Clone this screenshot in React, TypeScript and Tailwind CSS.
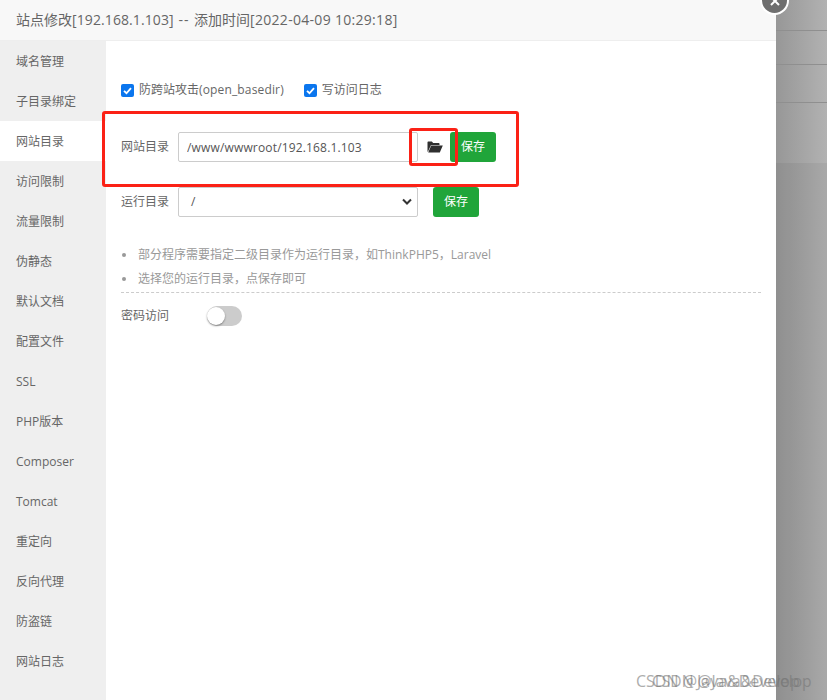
const font = '"Open Sans", "Noto Sans CJK SC", sans-serif';
const items = ["域名管理","子目录绑定","网站目录","访问限制","流量限制","伪静态","默认文档","配置文件","SSL","PHP版本","Composer","Tomcat","重定向","反向代理","防盗链","网站日志"];

function Check({ children, className }: { children: React.ReactNode; className?: string }) {
  return (
    <label className={"flex items-center " + (className ?? "")}>
      <span className="flex h-[13px] w-[13px] items-center justify-center rounded-[2px] bg-[#0b76ee]">
        <svg width="11" height="11" viewBox="0 0 12 12" fill="none">
          <path d="M2.2 6.3 4.9 9 9.8 3.4" stroke="#fff" strokeWidth="2" />
        </svg>
      </span>
      <span className="ml-[5px] text-[12px] text-[#666]">{children}</span>
    </label>
  );
}

function SaveButton({ className }: { className?: string }) {
  return (
    <button className={"h-[30px] w-[46px] rounded-[3px] bg-[#20a53a] text-[12px] text-white " + (className ?? "")}>保存</button>
  );
}

export default function App() {
  return (
    <div className="relative flex h-[700px] w-[827px] overflow-hidden" style={{ fontFamily: font }}>
      <div className="relative z-10 flex w-[776px] flex-col bg-white">
        <div className="flex h-[41px] items-center border-b border-[#eee] bg-[#f8f8f8] pb-[2px] pl-4 text-[14px] text-[#666]">
          <span className="whitespace-pre">站点修改<span className="tracking-[0.1px]">[192.168.1.103]</span><span className="tracking-[1px]"> -- </span>添加时间<span className="tracking-[0.3px]">[2022-04-09 10:29:18]</span></span>
        </div>
        <div className="flex flex-1">
          <div className="w-[106px] bg-[#efefef]">
            {items.map((t, i) => (
              <div key={t} className={"flex h-10 items-center pl-4 pt-[2px] text-[12px] text-[#666] " + (i === 2 ? "bg-white" : "")}>{t}</div>
            ))}
          </div>
          <div className="flex-1 pl-[15px] pr-[15px] pt-[41px]">
            <div className="flex h-4 items-center">
              <Check>防跨站攻击<span className="tracking-[0.15px]">(open_basedir)</span></Check>
              <Check className="ml-[20px]">写访问日志</Check>
            </div>
            <div className="relative mt-[34px] flex h-[30px] items-center">
              <span className="w-[57px] text-[12px] text-[#666]">网站目录</span>
              <input readOnly value="/www/wwwroot/192.168.1.103" className="h-[30px] w-[240px] rounded-[2px] border border-[#ccc] pl-2 text-[12px] tracking-[0.16px] text-[#555] outline-none" />
              <span className="flex w-[32px] justify-center pl-[1px]">
                <svg width="16" height="12" viewBox="0 0 16 12"><path d="M0.5 10.5V1.2C.5.8.8.5 1.2.5h3.6l1.4 1.5h5.6c.4 0 .7.3.7.7V4H4L.9 10.8zM4.2 4.6H15.8L12.8 11.6H1.2z" fill="#2f2f2f" /></svg>
              </span>
              <SaveButton />
            </div>
            <div className="mt-[25px] flex h-[30px] items-center">
              <span className="w-[57px] text-[12px] text-[#666]">运行目录</span>
              <div className="flex h-[30px] w-[240px] items-center justify-between rounded-[2px] border border-[#ccc] pl-3 pr-[5px] text-[12px] text-[#555]">
                <span>/</span>
                <svg width="10" height="8" viewBox="0 0 10 8" fill="none"><path d="M1 1.5 5 5.5 9 1.5" stroke="#333" strokeWidth="2" /></svg>
              </div>
              <SaveButton className="ml-[15px]" />
            </div>
            <ul className="mt-[26px] border-b border-dashed border-[#ccc] pb-[1px] text-[12px] text-[#999]">
              <li className="flex h-6 items-center"><span className="ml-[1px] mr-3 h-[4px] w-[4px] rounded-full bg-[#999]" />部分程序需要指定二级目录作为运行目录，如ThinkPHP5，Laravel</li>
              <li className="flex h-6 items-center"><span className="ml-[1px] mr-3 h-[4px] w-[4px] rounded-full bg-[#999]" />选择您的运行目录，点保存即可</li>
            </ul>
            <div className="mt-[12px] flex h-[22px] items-center">
              <span className="w-[86px] text-[12px] text-[#666]">密码访问</span>
              <span className="flex h-[20px] w-[35px] items-center rounded-full bg-[#ccc]">
                <span className="h-[18px] w-[18px] rounded-full bg-white shadow-[0_1px_2px_rgba(0,0,0,0.4)]" />
              </span>
            </div>
          </div>
        </div>
      </div>
      <div className="flex flex-1 flex-col bg-gradient-to-r from-[#979797] to-[#b2b2b2]">
        <div className="h-[31px] border-b border-[#8f8f8f]" />
        <div className="h-[34px] border-b border-[#8f8f8f]" />
        <div className="h-[38px] border-b border-[#8f8f8f]" />
        <div className="h-[60px]" />
        <div className="flex-1 bg-black/5" />
      </div>
      {/* close button */}
      <span className="absolute left-[760px] top-[-14px] z-20 flex h-[29px] w-[29px] items-center justify-center rounded-full border-2 border-white bg-[#6f6f6f]">
        <svg width="12" height="12" viewBox="0 0 12 12" fill="none"><path d="M2 2 10 10M10 2 2 10" stroke="#fff" strokeWidth="2" /></svg>
      </span>
      {/* annotations */}
      <div className="absolute left-[102px] top-[111px] z-20 h-[76px] w-[417px] rounded-[3px] border-[3px] border-[#fb2116]" />
      <div className="absolute left-[409px] top-[128px] z-20 h-[38px] w-[49px] rounded-[3px] border-[3px] border-[#fb2116]" />
      {/* watermark */}
      <span className="absolute left-[636px] top-[669px] z-30 whitespace-nowrap text-[16px] text-[#777] opacity-60">CSDN @Java&amp;Develop</span>
      <span className="absolute left-[652px] top-[670px] z-30 whitespace-nowrap text-[15.6px] text-[#777] opacity-60">CSDN @Java&amp;Develop</span>
    </div>
  );
}
